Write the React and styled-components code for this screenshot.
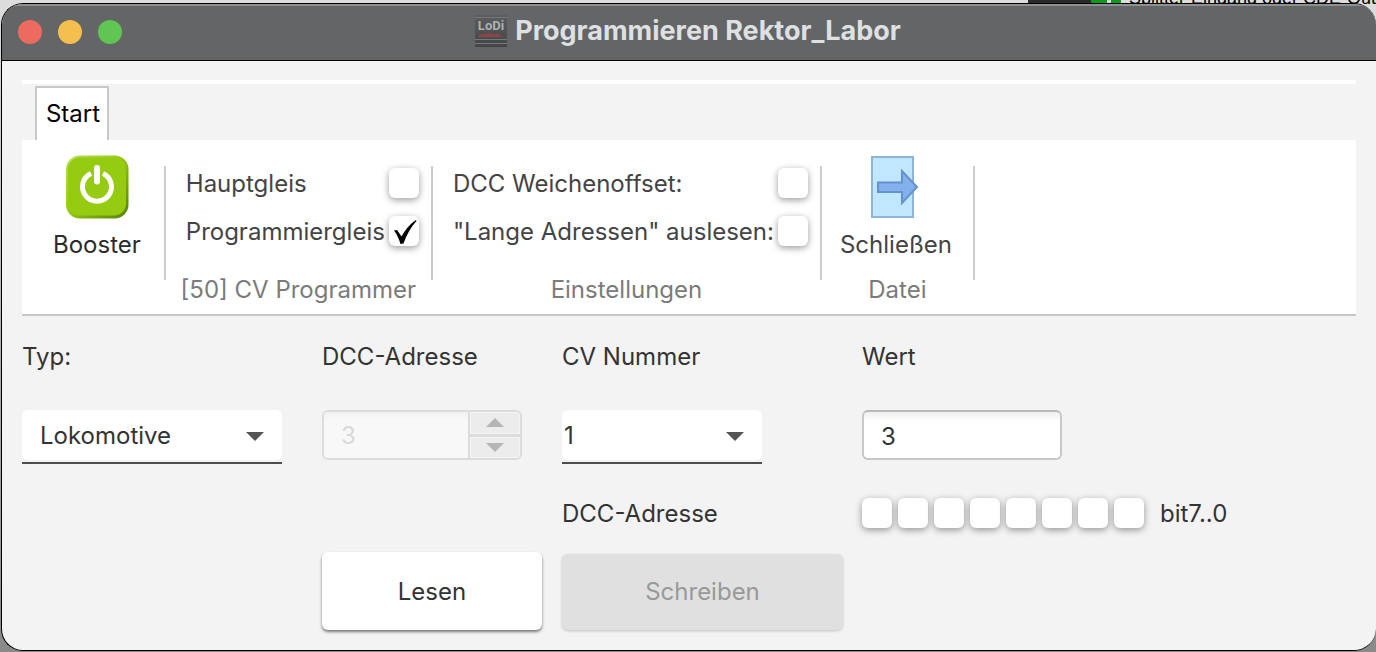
import { useState } from 'react';
import styled, { createGlobalStyle } from 'styled-components';

const BITS = [7, 6, 5, 4, 3, 2, 1, 0];

export default function App() {
  const [mainTrack, setMainTrack] = useState(false);
  const [progTrack, setProgTrack] = useState(true);
  const [offset, setOffset] = useState(false);
  const [longAddresses, setLongAddresses] = useState(false);
  const [type, setType] = useState('Lokomotive');
  const [cv, setCv] = useState('1');
  const [value, setValue] = useState('3');
  const [bits, setBits] = useState([]);

  function toggleBit(bit) {
    setBits(bits.includes(bit) ? bits.filter((b) => b !== bit) : [...bits, bit]);
  }

  return (
    <Desktop>
      <GlobalStyle />
      <Behind>
        <span className="panel" />
        <span className="led" />
        <span className="led small" />
        <span className="text">Splitter-Eingang oder CDE-Out</span>
      </Behind>
      <Window>
        <TitleBar>
          <Lights>
            <Light color="#ed6a5e" aria-label="Fenster schließen" />
            <Light color="#f5bf4f" aria-label="Minimieren" />
            <Light color="#61c554" aria-label="Zoomen" />
          </Lights>
          <Title>
            <LodiLogo />
            Programmieren Rektor_Labor
          </Title>
        </TitleBar>

        <Content>
          <Tabs>
            <Tab>Start</Tab>
          </Tabs>
          <Ribbon>
            <Group>
              <ToolButton first>
                <PowerIcon />
                Booster
              </ToolButton>
            </Group>
            <Separator />
            <Group>
              <Options>
                <Option>
                  Hauptgleis
                  <Check checked={mainTrack} onChange={() => setMainTrack(!mainTrack)} />
                </Option>
                <Option>
                  Programmiergleis
                  <Check checked={progTrack} onChange={() => setProgTrack(!progTrack)} />
                </Option>
              </Options>
              <GroupName>[50] CV Programmer</GroupName>
            </Group>
            <Separator />
            <Group>
              <Options>
                <Option>
                  DCC Weichenoffset:
                  <Check checked={offset} onChange={() => setOffset(!offset)} />
                </Option>
                <Option>
                  "Lange Adressen" auslesen:
                  <Check checked={longAddresses} onChange={() => setLongAddresses(!longAddresses)} />
                </Option>
              </Options>
              <GroupName>Einstellungen</GroupName>
            </Group>
            <Separator />
            <Group>
              <ToolButton>
                <ExitIcon />
                Schließen
              </ToolButton>
              <GroupName>Datei</GroupName>
            </Group>
            <Separator />
          </Ribbon>

          <Form>
            <Label htmlFor="type">Typ:</Label>
            <Label htmlFor="address">DCC-Adresse</Label>
            <Label htmlFor="cv">CV Nummer</Label>
            <Label htmlFor="value">Wert</Label>

            <SelectBox wide>
              <select id="type" value={type} onChange={(e) => setType(e.target.value)}>
                <option>Lokomotive</option>
                <option>Weiche</option>
              </select>
              <Arrow />
            </SelectBox>
            <Spinner>
              <input id="address" defaultValue="3" disabled />
              <div className="steps">
                <button type="button" disabled aria-label="Erhöhen">
                  <Arrow up light />
                </button>
                <button type="button" disabled aria-label="Verringern">
                  <Arrow light />
                </button>
              </div>
            </Spinner>
            <SelectBox>
              <select id="cv" value={cv} onChange={(e) => setCv(e.target.value)}>
                <option>1</option>
                <option>2</option>
                <option>3</option>
              </select>
              <Arrow />
            </SelectBox>
            <TextInput id="value" value={value} onChange={(e) => setValue(e.target.value)} />

            <CvName>DCC-Adresse</CvName>
            <Bits>
              {BITS.map((bit) => (
                <Check
                  key={bit}
                  aria-label={`bit${bit}`}
                  checked={bits.includes(bit)}
                  onChange={() => toggleBit(bit)}
                />
              ))}
              <span className="caption">bit7..0</span>
            </Bits>

            <ReadButton type="button">Lesen</ReadButton>
            <WriteButton type="button" disabled>
              Schreiben
            </WriteButton>
          </Form>
        </Content>
      </Window>
    </Desktop>
  );
}

function Check(props) {
  return (
    <CheckBox>
      <input type="checkbox" {...props} />
      {props.checked && (
        <svg width="30" height="30" viewBox="0 0 30 30">
          <path d="M5 14.5L8 14L12.5 20.5C16 14 21 8 27 4L27.5 5C22 11 17.5 19 14.5 27.5L11.5 28C10 23 8 18.5 5 14.5Z" />
        </svg>
      )}
    </CheckBox>
  );
}

function Arrow({ up, light }) {
  return (
    <svg width="18" height="9" viewBox="0 0 18 9">
      <path d={up ? 'M0 9L9 0L18 9Z' : 'M0 0H18L9 9Z'} fill={light ? '#b5b5b5' : '#555555'} />
    </svg>
  );
}

function LodiLogo() {
  return (
    <svg width="32" height="32" viewBox="0 0 32 32">
      <defs>
        <linearGradient id="lodi" x1="0" y1="0" x2="0" y2="1">
          <stop offset="0" stopColor="#5b5d5e" />
          <stop offset="1" stopColor="#434546" />
        </linearGradient>
      </defs>
      <rect width="32" height="32" fill="url(#lodi)" />
      <path d="M0 2.5H32M0 24.5H32M0 28.5H32" stroke="#777979" />
      <text x="16" y="15" textAnchor="middle" fontFamily="Roboto, sans-serif" fontSize="13" fill="#aeb0b2">
        LoDi
      </text>
      <path d="M4 22V19.5H8L9 18.5H18L20 20L22 18.5L28 22Z" fill="#8b4648" />
    </svg>
  );
}

function PowerIcon() {
  return (
    <svg width="64" height="64" viewBox="0 0 64 64">
      <defs>
        <linearGradient id="rim" x1="0" y1="0" x2="1" y2="1">
          <stop offset="0" stopColor="#b9e05e" />
          <stop offset="0.45" stopColor="#95cc12" />
          <stop offset="1" stopColor="#568000" />
        </linearGradient>
      </defs>
      <rect x="1" y="0.5" width="62.5" height="63" rx="14" fill="url(#rim)" />
      <rect x="3" y="2.5" width="58" height="58" rx="12" fill="#95cc12" />
      <path d="M26 18.5A14.5 14.5 0 1 0 38 18.5" fill="none" stroke="#fff" strokeWidth="5" />
      <path d="M32 13V26.5" stroke="#fff" strokeWidth="6" strokeLinecap="round" />
    </svg>
  );
}

function ExitIcon() {
  return (
    <svg width="64" height="64" viewBox="0 0 64 64">
      <rect x="8" y="2" width="41" height="60" fill="#c1e7ff" stroke="#8fb4dc" strokeWidth="2" />
      <path d="M14 27.5H38V16L53 32L38 48V37H14Z" fill="#84b1ec" stroke="#6492cf" strokeWidth="2" />
    </svg>
  );
}

const GlobalStyle = createGlobalStyle`
  * {
    box-sizing: border-box;
  }

  body {
    margin: 0;
    font-family: 'Inter', sans-serif;
    font-size: 24px;
    line-height: 32px;
    color: #333333;
  }

  button,
  input,
  select {
    margin: 0;
    font: inherit;
    color: inherit;
  }
`;

const Desktop = styled.div`
  position: relative;
  min-height: 100vh;
  padding: 3px 0 1px 1px;
  display: flex;
  overflow: hidden;
  background: linear-gradient(#dddddd, #8a8a8a);
`;

const Behind = styled.div`
  position: absolute;
  top: 0;
  right: 0;
  height: 24px;
  width: 348px;
  display: flex;
  align-items: flex-start;
  overflow: hidden;
  white-space: nowrap;
  color: #000;

  span {
    flex-shrink: 0;
  }

  .panel {
    height: 3px;
    width: 63px;
    background-color: #2a2a2a;
  }

  .led {
    height: 3px;
    width: 16px;
    margin-right: 4px;
    background-color: #0b9a1b;
  }

  .small {
    width: 10px;
    margin-right: 8px;
  }

  .text {
    margin-top: -14px;
    font-family: 'Liberation Sans', sans-serif;
    font-size: 18px;
    line-height: 24px;
  }
`;

const Window = styled.div`
  position: relative;
  flex: 1;
  border: 1px solid #000;
  border-right: none;
  border-radius: 22px;
  overflow: hidden;
  background-color: #f3f3f3;
`;

const TitleBar = styled.header`
  height: 57px;
  display: grid;
  grid-template-columns: 1fr auto 1fr;
  align-items: center;
  padding: 0 18px 0 16px;
  border-top: 2px solid #8e9091;
  border-bottom: 1px solid #000;
  background-color: #646567;
`;

const Lights = styled.div`
  display: flex;
  gap: 16px;
  padding-bottom: 2px;
`;

const Light = styled.button`
  height: 24px;
  width: 24px;
  padding: 0;
  border: none;
  border-radius: 50%;
  background-color: ${(props) => props.color};
`;

const Title = styled.h1`
  margin: 0;
  padding-bottom: 4px;
  display: flex;
  align-items: center;
  gap: 8px;
  font-size: 27px;
  font-weight: 700;
  color: #dfe0e2;
`;

const Content = styled.main`
  padding: 19px 20px;
`;

const Tabs = styled.nav`
  height: 60px;
  padding: 2px 13px 0;
  border-top: 4px solid #fff;
`;

const Tab = styled.button`
  height: 54px;
  width: 74px;
  padding: 0 0 0 2px;
  border: 2px solid #c8c8c8;
  border-bottom: none;
  background-color: #fff;
  color: #000;
`;

const Ribbon = styled.section`
  height: 176px;
  display: flex;
  border-bottom: 2px solid #c8c8c8;
  background-color: #fff;
  color: #444;
`;

const Group = styled.div`
  display: flex;
  flex-direction: column;
  align-items: center;
  justify-content: space-between;
  padding-bottom: 8px;
`;

const Separator = styled.div`
  height: 114px;
  width: 2px;
  margin-top: 26px;
  background-color: #cccccc;
`;

const ToolButton = styled.button`
  display: flex;
  flex-direction: column;
  align-items: center;
  gap: 10px;
  padding: ${(props) => (props.first ? '15px 23px 0 31px' : '15px 21px 0 18px')};
  border: none;
  background: none;
  color: ${(props) => props.first && '#2b2b2b'};
`;

const Options = styled.div`
  display: flex;
  flex-direction: column;
  gap: 16px;
  padding: 28px 12px 0 20px;
`;

const Option = styled.label`
  display: flex;
  align-items: flex-start;
  justify-content: space-between;
  gap: 4px;
`;

const GroupName = styled.span`
  color: #7b7b7b;
`;

const CheckBox = styled.span`
  height: 30px;
  width: 30px;
  display: grid;

  input {
    grid-area: 1 / 1;
    height: 30px;
    width: 30px;
    appearance: none;
    border-radius: 6px;
    background-color: #fff;
    box-shadow: 0 2px 7px #00000066;
  }

  svg {
    grid-area: 1 / 1;
    z-index: 1;
    pointer-events: none;
  }
`;

const Form = styled.form`
  display: grid;
  grid-template-columns: 300px 240px 300px 1fr;
  padding-top: 25px;
`;

const Label = styled.label`
  height: 69px;
`;

const SelectBox = styled.div`
  height: 54px;
  width: ${(props) => (props.wide ? '260px' : '200px')};
  display: grid;
  align-items: center;
  border-bottom: 2px solid #4d4d4d;

  select {
    grid-area: 1 / 1;
    height: 50px;
    width: 100%;
    margin-bottom: 2px;
    padding: 2px ${(props) => (props.wide ? '18px' : '2px')} 0;
    appearance: none;
    border: none;
    border-radius: 6px;
    background-color: #fff;
  }

  svg {
    grid-area: 1 / 1;
    justify-self: end;
    margin-right: 18px;
    pointer-events: none;
  }
`;

const Spinner = styled.div`
  height: 50px;
  width: 200px;
  display: flex;
  border: 2px solid #dcdcdc;
  border-radius: 6px;
  overflow: hidden;

  input {
    flex: 1;
    min-width: 0;
    padding: 2px 17px 0;
    border: none;
    background: linear-gradient(#f2f2f2, #f8f8f8 20%);
    color: #d9d9d9;
  }

  .steps {
    width: 52px;
    display: grid;
    gap: 3px;
    border-left: 2px solid #dcdcdc;
    background-color: #dcdcdc;
  }

  button {
    display: flex;
    align-items: center;
    justify-content: center;
    padding: 0;
    border: 1px solid #f5f5f5;
    background-color: #ececec;
  }
`;

const TextInput = styled.input`
  height: 50px;
  width: 200px;
  padding: 2px 17px 0;
  border: 2px solid #c8c8c8;
  border-top-color: #b9b9b9;
  border-radius: 6px;
  background: linear-gradient(#efefef, #fff 20%);
`;

const CvName = styled.span`
  grid-column: 3;
  margin-top: 34px;
`;

const Bits = styled.div`
  display: flex;
  align-items: flex-start;
  gap: 6px;
  margin-top: 34px;

  .caption {
    margin-left: 10px;
  }
`;

const ReadButton = styled.button`
  grid-column: 2;
  height: 78px;
  width: 220px;
  margin-top: 22px;
  padding: 2px 0 0;
  border: none;
  border-radius: 6px;
  background-color: #fff;
  box-shadow: 0 2px 3px #00000080;
`;

const WriteButton = styled.button`
  height: 76px;
  width: 281px;
  margin-top: 24px;
  border: none;
  border-radius: 6px;
  background-color: #e0e0e0;
  box-shadow: 0 1px 3px #00000033;
  color: #999999;
`;
